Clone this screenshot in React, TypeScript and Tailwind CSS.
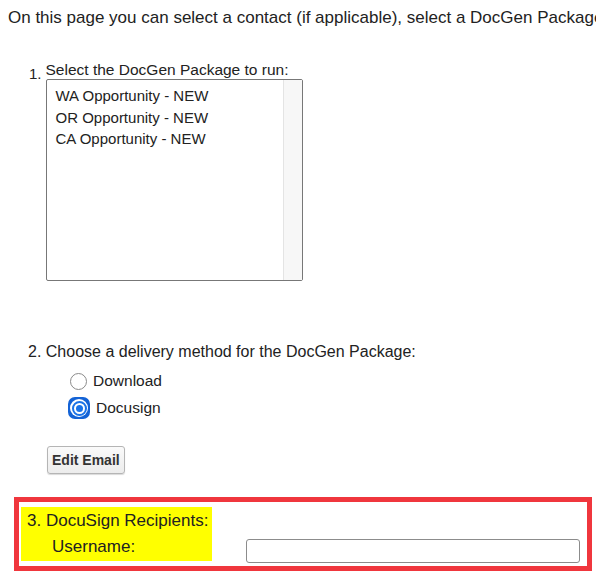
import { useState } from "react";

const packages = ["WA Opportunity - NEW", "OR Opportunity - NEW", "CA Opportunity - NEW"];

const Radio = ({ checked, label, onSelect }: { checked: boolean; label: string; onSelect: () => void }) => (
  <label className="flex items-center gap-[6px] cursor-pointer" onClick={onSelect}>
    {checked ? (
      <span className="flex h-[22px] w-[22px] items-center justify-center rounded-[7px] bg-[#1463d6] -ml-[2px]">
        <span className="flex h-[18px] w-[18px] items-center justify-center rounded-full bg-white">
          <span className="flex h-[15px] w-[15px] items-center justify-center rounded-full border-2 border-[#1a73e8]">
            <span className="h-[7px] w-[7px] rounded-full bg-[#1a73e8]" />
          </span>
        </span>
      </span>
    ) : (
      <span className="h-[17px] w-[17px] rounded-full border border-[#8a8a8a] bg-white" />
    )}
    <span>{label}</span>
  </label>
);

export default function App() {
  const [method, setMethod] = useState("docusign");
  const [username, setUsername] = useState("");

  return (
    <div
      className="h-[578px] w-[596px] overflow-hidden bg-white text-[15px] text-[#222]"
      style={{ fontFamily: '"Liberation Sans", Arial, sans-serif' }}
    >
      <p className="whitespace-nowrap pl-2 pt-[7px] text-[17px] leading-[22px]">
        On this page you can select a contact (if applicable), select a DocGen Package
      </p>

      {/* step 1 */}
      <div className="mt-[31px] flex pl-[29px]">
        <span className="pt-[3px] text-[15px]">1.</span>
        <div className="ml-[4px]">
          <div className="text-[15.5px] leading-[20px]">Select the DocGen Package to run:</div>
          <div className="mt-[-1px] flex h-[202px] w-[257px] rounded-[2px] border border-[#777]">
            <ul className="flex-1 pl-[9px] pt-[5px]">
              {packages.map((p) => (
                <li key={p} className="leading-[21.5px]">
                  {p}
                </li>
              ))}
            </ul>
            <div className="w-[19px] border-l border-[#e4e4e4] bg-[#f7f7f7]" />
          </div>
        </div>
      </div>

      {/* step 2 */}
      <div className="mt-[61px] pl-[28px] text-[16px]">
        <div className="leading-5">2. Choose a delivery method for the DocGen Package:</div>
        <div className="mt-[8px] flex flex-col gap-[5px] pl-[42px] text-[15.5px] leading-[22px]">
          <Radio checked={method === "download"} label="Download" onSelect={() => setMethod("download")} />
          <Radio checked={method === "docusign"} label="Docusign" onSelect={() => setMethod("docusign")} />
        </div>
        <button className="ml-[19px] mt-[27px] h-[28px] rounded-[3px] border border-[#b5b5b5] bg-gradient-to-b from-[#fafafa] to-[#ececec] px-[4px] text-[14px] font-bold text-[#333] shadow-[0_1px_1px_rgba(0,0,0,0.15)]">
          Edit Email
        </button>
      </div>

      {/* step 3 */}
      <div className="ml-[14px] mt-[23px] flex h-[74px] w-[578px] items-start border-[5px] border-[#f0363d] pl-[2px] pt-[5px]">
        <div className="flex h-[54px] w-[191px] flex-col justify-center bg-[#ffff00] pl-[6px] text-[17px] leading-[26px]">
          <div>3. DocuSign Recipients:</div>
          <div className="pl-[25px]">Username:</div>
        </div>
        <input
          value={username}
          onChange={(e) => setUsername(e.target.value)}
          className="ml-[34px] mt-[32px] h-[24px] w-[334px] rounded-[3px] border border-[#8c8c8c] bg-white px-1 text-[14px] outline-none"
        />
      </div>
    </div>
  );
}
